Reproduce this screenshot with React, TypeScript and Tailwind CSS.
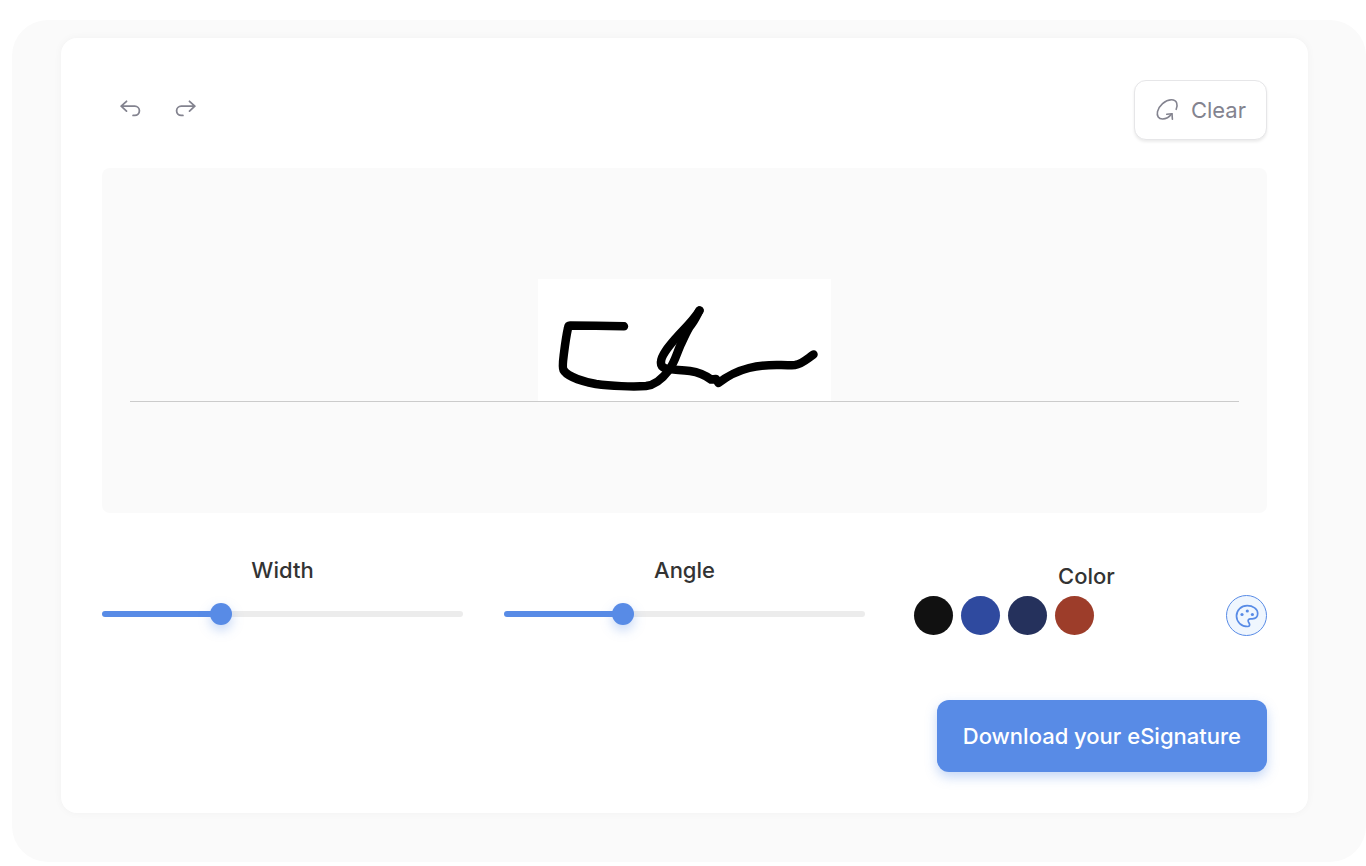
import React, { useState } from 'react';

const COLORS = [
  { name: 'Black', value: '#000000', swatch: 'bg-[#111111]' },
  { name: 'Blue', value: '#2f4a9f', swatch: 'bg-[#2f4a9f]' },
  { name: 'Navy', value: '#25315c', swatch: 'bg-[#25315c]' },
  { name: 'Red', value: '#9d3d2a', swatch: 'bg-[#9d3d2a]' },
];

const UndoIcon = ({ className = '' }: { className?: string }) => (
  <svg viewBox="0 0 24 24" className={`h-6 w-6 ${className}`} fill="none" stroke="currentColor" strokeWidth="1.8" strokeLinecap="round" strokeLinejoin="round" aria-hidden="true">
    <path d="M8.5 5.300 3.200 10.200l5.300 4.900M3.200 10.200h13.600a4.600 4.600 0 0 1 0 9.200h-1.700" />
  </svg>
);

const ClearIcon = () => (
  <svg viewBox="0 0 24 24" className="h-6 w-6" fill="none" stroke="currentColor" strokeWidth="1.600" strokeLinecap="round" strokeLinejoin="round" aria-hidden="true">
    <path d="M21.2 11.3C23 7 22.2 1.8 16.5 1.8 10 1.8 3.8 7.8 2.5 13.6c-1 4.6 1.2 7.4 5 7.4 3.6 0 7-2.2 9.4-5.2" />
    <path d="m11.8 16.3 5.2-.6.4 5.6" />
  </svg>
);

const PaletteIcon = () => (
  <svg viewBox="0 0 24 24" className="h-6 w-6 shrink-0" fill="none" stroke="currentColor" strokeWidth="1.700" strokeLinecap="round" strokeLinejoin="round" aria-hidden="true">
    <path d="M12.2 1.7C18 1.7 22.7 5 22.7 9.600c0 3.300-2.400 5.200-5.500 5.200h-1.600c-2.100 0-3 1.500-2.200 3.100l.9 1.600c.8 1.500.1 3-1.500 3C6.400 22.500 1.500 18 1.500 12.100 1.500 6 6.300 1.700 12.200 1.700Z" />
    <g fill="currentColor" stroke="none">
      <circle cx="7" cy="10.500" r="1.600" />
      <circle cx="12.300" cy="7" r="1.600" />
      <circle cx="17.400" cy="10.500" r="1.600" />
    </g>
  </svg>
);

interface SliderProps {
  id: string;
  label: string;
  value: number;
  onChange: (value: number) => void;
}

const Slider = ({ id, label, value, onChange }: SliderProps) => (
  <div className="flex flex-col">
    <label htmlFor={id} className="text-center text-[22px] leading-7 font-medium text-[#333333]">
      {label}
    </label>
    <div className="mt-[19px] flex h-[22px] items-center">
      <input
        id={id}
        type="range"
        min={0}
        max={100}
        value={value}
        onChange={(e) => onChange(Number(e.target.value))}
        style={{ backgroundImage: `linear-gradient(to right, #588be6 ${value}%, #ececec ${value}%)` }}
        className="h-1.5 w-full cursor-pointer appearance-none rounded-full [&::-webkit-slider-thumb]:h-[22px] [&::-webkit-slider-thumb]:w-[22px] [&::-webkit-slider-thumb]:appearance-none [&::-webkit-slider-thumb]:rounded-full [&::-webkit-slider-thumb]:bg-[#588be6] [&::-webkit-slider-thumb]:shadow-[0_5px_12px_rgba(88,139,230,0.35)]"
      />
    </div>
  </div>
);

export default function App() {
  const [width, setWidth] = useState(32);
  const [angle, setAngle] = useState(32);
  const [color, setColor] = useState(COLORS[0].value);
  const [cleared, setCleared] = useState(false);

  return (
    <div className="bg-white pt-5 pb-1 pl-3 font-['Inter',sans-serif]">
      <main className="rounded-[36px] bg-[#fafafa] pt-[18px] pr-[58px] pb-[49px] pl-[49px]">
        <section className="rounded-2xl bg-white px-[41px] pt-[42px] pb-[41px] shadow-[0_0_8px_rgba(0,0,0,0.04)]">
          <div className="flex items-start justify-between text-[#83838f]">
            <div className="flex">
              <button type="button" aria-label="Undo" onClick={() => setCleared(false)} className="flex h-14 w-14 items-center justify-center">
                <UndoIcon />
              </button>
              <button type="button" aria-label="Redo" onClick={() => setCleared(true)} className="flex h-14 w-14 items-center justify-center">
                <UndoIcon className="-scale-x-100" />
              </button>
            </div>
            <button
              type="button"
              onClick={() => setCleared(true)}
              className="flex h-[60px] items-center gap-3 rounded-xl border border-[#e6e6e8] bg-white px-5 text-[22px] leading-7 shadow-[0_2px_3px_rgba(0,0,0,0.08)]"
            >
              <ClearIcon />
              Clear
            </button>
          </div>

          <div className="mt-7 flex h-[345px] flex-col justify-end rounded-lg bg-[#fafafa] px-7 pb-[111px]">
            <div className="flex justify-center border-b border-[#cbcbcb]">
              {!cleared && (
                <svg viewBox="0 0 293 122" className="h-[122px] w-[293px] bg-white" fill="none" stroke={color} strokeWidth={width * 0.265} strokeLinecap="round" strokeLinejoin="round" role="img" aria-label="Signature">
                  <path d="M86 47.300 C75 47 45 46.500 32 46.500 Q30.300 46.500 30 49 C28 58 27 66 26 74 C25 82 24 88 25.500 91 C29 98 48 103 58 105 C72 107 95 108 108 107 C118 106 125 99 131 91 C137 83 139 73 143.500 64 C147 57 149 51 153 46 C157 41 159 36 161.500 31.500" />
                  <path d="M161.500 31.500 C155 42 146 50 138 59 C132 66 123 76 123 83 C122 92 134 90 152 92 C159 93 167 96 173 100.500 L178 100 L180.500 104 C192 95 203 91 211 89 C230 84 243 87 257 86 C264 85 269 80 275.500 75.500" />
                </svg>
              )}
            </div>
          </div>

          <div className="mt-[43px] grid grid-cols-3 gap-x-[41px]">
            <Slider id="width" label="Width" value={width} onChange={setWidth} />
            <Slider id="angle" label="Angle" value={angle} onChange={setAngle} />
            <fieldset>
              <legend className="w-full pt-1.5 text-center text-[22px] leading-7 font-medium text-[#333333]">Color</legend>
              <div className="mt-[5px] flex items-center justify-between pl-2">
                <div className="flex gap-2">
                  {COLORS.map((c) => (
                    <input
                      key={c.name}
                      type="radio"
                      name="color"
                      aria-label={c.name}
                      checked={color === c.value}
                      onChange={() => setColor(c.value)}
                      className={`h-[39px] w-[39px] cursor-pointer appearance-none rounded-full ${c.swatch}`}
                    />
                  ))}
                </div>
                <button type="button" aria-label="Custom color" className="flex h-[41px] w-[41px] items-center justify-center rounded-full border border-[#588be6] bg-[#eff6fe] text-[#588be6]">
                  <PaletteIcon />
                </button>
              </div>
            </fieldset>
          </div>

          <div className="mt-16 flex justify-end">
            <button type="button" className="h-[72px] rounded-xl bg-[#588be6] px-[26px] text-[22px] leading-7 font-medium text-white shadow-[0_5px_12px_rgba(88,139,230,0.35)]">
              Download your eSignature
            </button>
          </div>
        </section>
      </main>
    </div>
  );
}
